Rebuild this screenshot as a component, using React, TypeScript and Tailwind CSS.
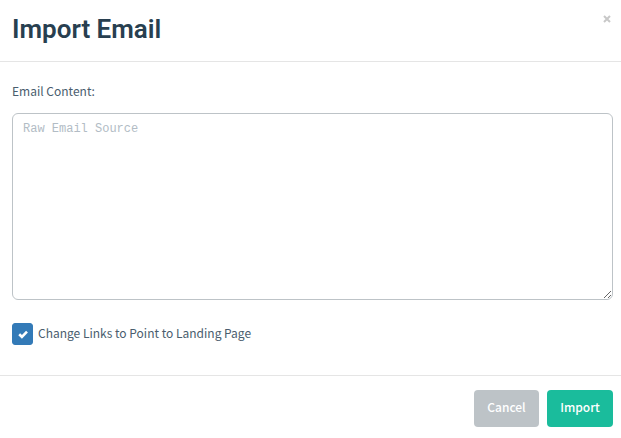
export default function App() {
  return (
    <div
      role="dialog"
      aria-labelledby="import-title"
      className="min-h-screen w-full bg-white font-['Noto_Sans_CJK_SC',sans-serif] text-[12px] leading-5 text-[#4a5d6e]"
    >
      <header className="flex items-start justify-between border-b border-[#e5e5e5] pt-3 pr-2 pb-3.5 pl-3">
        <h1
          id="import-title"
          className="font-['Roboto',sans-serif] text-[26px] leading-[35px] font-semibold text-[#283f50]"
        >
          Import Email
        </h1>
        <button
          type="button"
          aria-label="Close"
          className="flex h-3.5 w-3 items-center justify-center text-[#c8c8c8]"
        >
          <svg viewBox="0 0 8 8" className="size-2" fill="none" stroke="currentColor" strokeWidth="2">
            <path d="M1 1l6 6M7 1L1 7" />
          </svg>
        </button>
      </header>

      <form id="import-form" className="flex flex-col pt-[19px] pr-2 pb-[30px] pl-3" onSubmit={(e) => e.preventDefault()}>
        <label htmlFor="content">Email Content:</label>
        <textarea
          id="content"
          placeholder="Raw Email Source"
          className="mt-3 h-[187px] w-full resize-y rounded-md border border-[#bdc3c7] px-2.5 py-1.5 font-['Liberation_Mono',monospace] text-[12px] leading-[18px] placeholder:text-[#b2bcc5] focus:outline-none"
        />
        <div className="mt-[23px] flex items-start gap-[5px]">
          <span className="grid h-[22px] w-[21px] place-items-center">
            <input
              id="convert-links"
              type="checkbox"
              defaultChecked
              className="peer col-start-1 row-start-1 h-full w-full appearance-none rounded-[3px] border border-[#337ab7] bg-white checked:bg-[#337ab7]"
            />
            <svg
              aria-hidden="true"
              viewBox="0 0 10 10"
              fill="none"
              stroke="currentColor"
              strokeWidth="2.6"
              className="pointer-events-none col-start-1 row-start-1 hidden size-2.5 text-white peer-checked:block"
            >
              <path d="M1.2 5.2l2.7 2.6L9 2.6" />
            </svg>
          </span>
          <label htmlFor="convert-links">Change Links to Point to Landing Page</label>
        </div>
      </form>

      <footer className="flex justify-end gap-2 border-t border-[#e5e5e5] pt-3.5 pr-2 pb-2.5 text-white">
        <button type="button" className="h-[37px] w-[65px] rounded bg-[#bdc3c7] pb-1 font-medium">
          Cancel
        </button>
        <button type="submit" form="import-form" className="h-[37px] w-[66px] rounded bg-[#1abc9c] pb-1 font-medium">
          Import
        </button>
      </footer>
    </div>
  );
}
